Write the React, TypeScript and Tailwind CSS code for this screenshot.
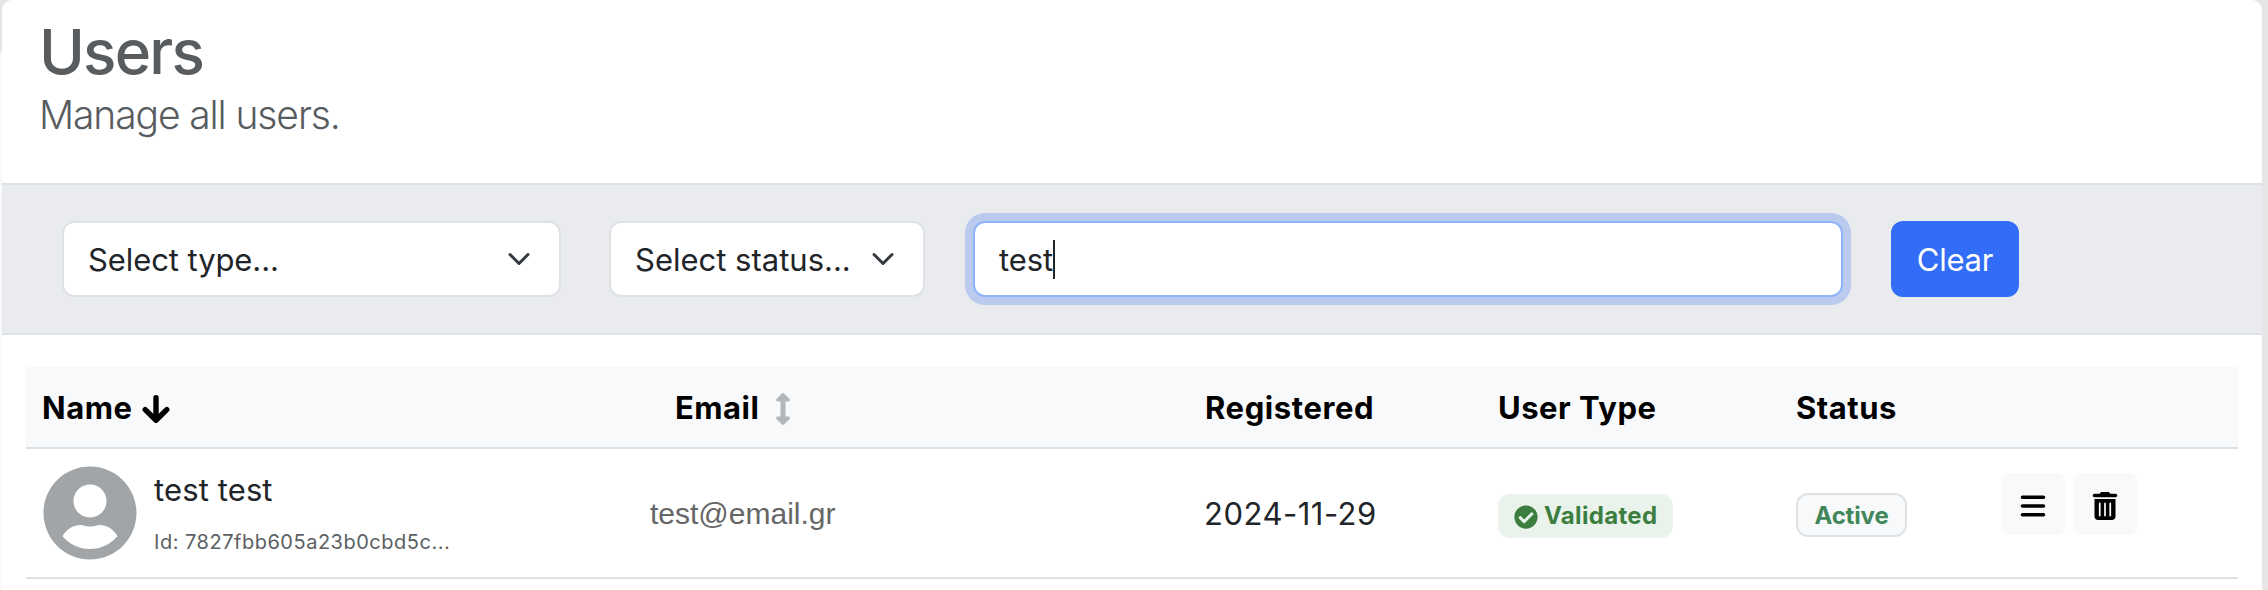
import type { ReactNode } from "react";
import { FaArrowsAltV, FaCheckCircle, FaUserCircle } from "react-icons/fa";
import { FaBars, FaTrashCan } from "react-icons/fa6";

function Chevron() {
  return (
    <svg viewBox="0 0 16 16" className="size-6 shrink-0" fill="none" stroke="#343a40" strokeWidth="2" strokeLinecap="round" strokeLinejoin="round">
      <path d="m2 5 6 6 6-6" />
    </svg>
  );
}

function ArrowDown() {
  return (
    <svg viewBox="0 0 28 28" className="size-7 shrink-0" fill="none" stroke="#000" strokeWidth="5.4" strokeLinecap="round" strokeLinejoin="round">
      <path d="M14 2.8v22M3.2 14.6 14 25.2l10.8-10.6" />
    </svg>
  );
}

function Select({ label, className }: { label: string; className: string }) {
  return (
    <button className={`flex h-19 items-center justify-between rounded-xl border-2 border-[#dee2e6] bg-white pl-6 ${className}`}>
      <span className="pt-0.5 whitespace-nowrap">{label}</span>
      <Chevron />
    </button>
  );
}

function IconButton({ label, children }: { label: string; children: ReactNode }) {
  return (
    <button aria-label={label} className="flex h-[62px] w-16 items-center justify-center rounded-lg bg-[#f8f9fa] text-[28px] text-black">
      {children}
    </button>
  );
}

const COLUMNS = "grid grid-cols-[608px_554px_293px_299px_205px_253px]";

export default function App() {
  return (
    <div className="flex h-[590px] w-[2268px] overflow-hidden bg-[#e6e6e6] font-['Inter',sans-serif] text-[31px] text-[#212529]">
      <div className="flex w-0.5 flex-col">
        <div className="h-[52px]" />
        <div className="flex-1 bg-[#f8f9fa]" />
      </div>
      <main className="flex w-[2260px] flex-col rounded-t-[10px] bg-white">
        <header className="h-[185px] border-b-2 border-[#dee2e6] pt-[17px] pl-[37px] text-[#585c5f]">
          <h1 className="text-[62px] leading-[70px] font-medium tracking-[-1.8px]">Users</h1>
          <p className="text-[39px] leading-[55px] font-light tracking-[-1.1px]">Manage all users.</p>
        </header>

        <section className="flex h-[150px] items-center gap-12 border-b-2 border-[#dee2e6] bg-[#e9ebef] pl-[60px]">
          <Select label="Select type..." className="w-[499px] pr-[28px] tracking-[-0.09px]" />
          <Select label="Select status..." className="w-[316px] pr-[28px]" />
          <div className="flex h-19 w-[870px] items-center rounded-xl border-2 border-[#8eb5fa] bg-white pl-6 ring-8 ring-[#bbcbf0]">
            <span className="pt-0.5 tracking-[-0.09px]">test</span>
            <span className="h-[39px] w-0.5 bg-[#212529]" />
          </div>
          <button className="h-19 w-32 rounded-xl bg-[#316df6] pt-0.5 tracking-[-0.23px] text-white">Clear</button>
        </section>

        <div className="mt-8 ml-6 w-[2212px]">
          <div className={`${COLUMNS} h-[82px] items-center border-b-2 border-[#dee2e6] bg-[#f8f9fb] pt-0.5 font-bold tracking-[0.5px] text-black`}>
            <div className="flex items-center gap-[10px] pl-4">
              Name
              <span className="pt-0.5"><ArrowDown /></span>
            </div>
            <div className="flex items-center gap-2 pl-[41px]">
              Email
              <FaArrowsAltV className="mt-0.5 size-8 text-[#b2b5ba]" />
            </div>
            <div className="pl-[17px] tracking-[0.6px]">Registered</div>
            <div className="pl-[17px]">User Type</div>
            <div className="pl-4">Status</div>
            <div />
          </div>

          <div className={`${COLUMNS} h-[130px] border-b-2 border-[#dee2e6]`}>
            <div className="flex items-center gap-4 pl-4">
              <FaUserCircle className="size-24 text-[#a1a5a8]" />
              <div className="flex flex-col pt-[5px]">
                <span className="leading-[52px] tracking-[0.12px]">test test</span>
                <span className="text-[20px] leading-[52px] tracking-[0.51px] text-[#5c5f62]">Id: 7827fbb605a23b0cbd5c...</span>
              </div>
            </div>
            <div className="flex items-center pt-px pl-4 font-['Liberation_Sans',sans-serif] text-[30px] text-[#666]">test@email.gr</div>
            <div className="flex items-center pt-0.5 pl-4 tracking-[0.5px]">2024-11-29</div>
            <div className="flex items-center pt-1.5 pl-[17px]">
              <span className="flex h-11 w-[175px] items-center gap-1.5 rounded-xl bg-[#e9f3eb] pl-4 text-[24px] font-bold tracking-[0.33px] text-[#3c7e40]">
                <FaCheckCircle className="mt-0.5 size-6" />
                Validated
              </span>
            </div>
            <div className="flex items-center pt-1 pl-4">
              <span className="flex h-11 w-[111px] items-center justify-center rounded-xl border-2 border-[#dee2e6] bg-[#f8f9fa] pt-0.5 text-[24px] font-bold tracking-[-0.15px] text-[#41875a]">
                Active
              </span>
            </div>
            <div className="flex gap-2 pt-6 pl-4">
              <IconButton label="Details"><FaBars className="mt-1" /></IconButton>
              <IconButton label="Delete"><FaTrashCan className="mt-1" /></IconButton>
            </div>
          </div>
        </div>
      </main>
    </div>
  );
}
